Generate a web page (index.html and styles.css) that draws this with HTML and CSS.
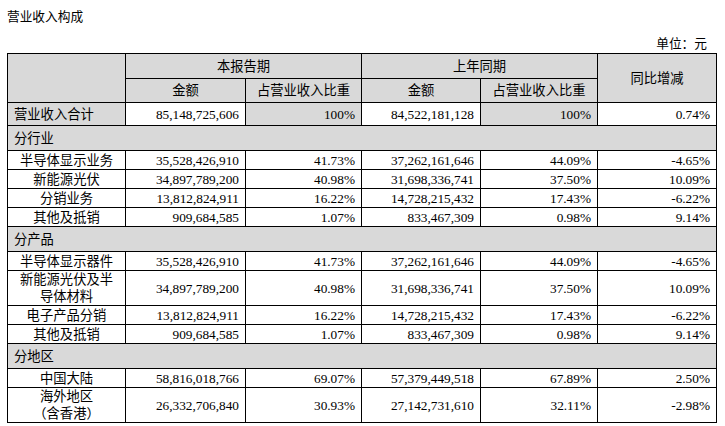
FILE: index.html
```html
<!DOCTYPE html>
<html lang="zh-CN">
<head>
<meta charset="utf-8">
<title>营业收入构成</title>
<link rel="stylesheet" href="styles.css">
</head>
<body>
<div class="page">
  <div class="title">营业收入构成</div>
  <div class="unit">单位：元</div>
  <table class="rev">
    <colgroup>
      <col class="c1"><col class="c2"><col class="c3"><col class="c4"><col class="c5"><col class="c6">
    </colgroup>
    <tr class="h1">
      <td class="g" rowspan="2"></td>
      <td class="g ctr" colspan="2">本报告期</td>
      <td class="g ctr" colspan="2">上年同期</td>
      <td class="g ctr" rowspan="2">同比增减</td>
    </tr>
    <tr class="h2">
      <td class="g ctr">金额</td>
      <td class="g ctr">占营业收入比重</td>
      <td class="g ctr">金额</td>
      <td class="g ctr">占营业收入比重</td>
    </tr>
    <tr class="tot">
      <td class="g lft">营业收入合计</td>
      <td class="num">85,148,725,606</td>
      <td class="g num">100%</td>
      <td class="num">84,522,181,128</td>
      <td class="g num">100%</td>
      <td class="num">0.74%</td>
    </tr>
    <tr class="sec"><td class="g lft" colspan="6">分行业</td></tr>
    <tr class="r">
      <td class="ctr">半导体显示业务</td><td class="num">35,528,426,910</td><td class="num">41.73%</td><td class="num">37,262,161,646</td><td class="num">44.09%</td><td class="num">-4.65%</td>
    </tr>
    <tr class="r">
      <td class="ctr">新能源光伏</td><td class="num">34,897,789,200</td><td class="num">40.98%</td><td class="num">31,698,336,741</td><td class="num">37.50%</td><td class="num">10.09%</td>
    </tr>
    <tr class="r">
      <td class="ctr">分销业务</td><td class="num">13,812,824,911</td><td class="num">16.22%</td><td class="num">14,728,215,432</td><td class="num">17.43%</td><td class="num">-6.22%</td>
    </tr>
    <tr class="r">
      <td class="ctr">其他及抵销</td><td class="num">909,684,585</td><td class="num">1.07%</td><td class="num">833,467,309</td><td class="num">0.98%</td><td class="num">9.14%</td>
    </tr>
    <tr class="sec"><td class="g lft" colspan="6">分产品</td></tr>
    <tr class="r">
      <td class="ctr">半导体显示器件</td><td class="num">35,528,426,910</td><td class="num">41.73%</td><td class="num">37,262,161,646</td><td class="num">44.09%</td><td class="num">-4.65%</td>
    </tr>
    <tr class="r2">
      <td class="ctr">新能源光伏及半<br>导体材料</td><td class="num">34,897,789,200</td><td class="num">40.98%</td><td class="num">31,698,336,741</td><td class="num">37.50%</td><td class="num">10.09%</td>
    </tr>
    <tr class="r">
      <td class="ctr">电子产品分销</td><td class="num">13,812,824,911</td><td class="num">16.22%</td><td class="num">14,728,215,432</td><td class="num">17.43%</td><td class="num">-6.22%</td>
    </tr>
    <tr class="r">
      <td class="ctr">其他及抵销</td><td class="num">909,684,585</td><td class="num">1.07%</td><td class="num">833,467,309</td><td class="num">0.98%</td><td class="num">9.14%</td>
    </tr>
    <tr class="sec"><td class="g lft" colspan="6">分地区</td></tr>
    <tr class="r">
      <td class="ctr">中国大陆</td><td class="num">58,816,018,766</td><td class="num">69.07%</td><td class="num">57,379,449,518</td><td class="num">67.89%</td><td class="num">2.50%</td>
    </tr>
    <tr class="r2">
      <td class="ctr">海外地区<br>（含香港）</td><td class="num">26,332,706,840</td><td class="num">30.93%</td><td class="num">27,142,731,610</td><td class="num">32.11%</td><td class="num">-2.98%</td>
    </tr>
  </table>
</div>
</body>
</html>
```
FILE: styles.css
```css
html, body {
  margin: 0;
  padding: 0;
  background: #fff;
}
body {
  font-family: "Liberation Serif", "Noto Sans CJK SC", serif;
  font-size: 13.3px;
  color: #000;
}
.page {
  width: 725px;
  height: 426px;
  padding: 8px 0 0 7px;
  box-sizing: border-box;
}
.title {
  height: 18px;
  line-height: 18px;
  font-size: 12.7px;
}
.unit {
  margin-top: 9px;
  width: 700px;
  text-align: right;
  height: 18px;
  line-height: 18px;
  font-size: 12.7px;
}
.rev {
  border-collapse: collapse;
  table-layout: fixed;
  width: 709px;
}
.c1 { width: 118px; }
.c2 { width: 120px; }
.c3 { width: 116px; }
.c4 { width: 119px; }
.c5 { width: 117px; }
.c6 { width: 119px; }
.rev td {
  border: 1px solid #000;
  padding: 0 6px;
  line-height: 17px;
  white-space: nowrap;
}
.rev .g { background: #d9d9d9; }
.ctr { text-align: center; }
.lft { text-align: left; padding-left: 8px; }
.num { text-align: right; }
.h1 td { height: 24px; }
.h2 td { height: 23px; }
.tot td { height: 22px; }
.sec td { height: 24px; }
.r td { height: 18px; }
.r2 td { height: 34px; }
```
